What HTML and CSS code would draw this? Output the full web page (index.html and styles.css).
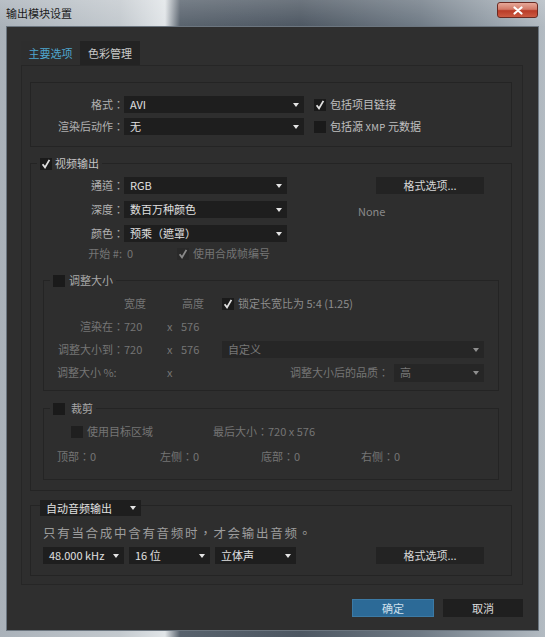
FILE: index.html
```html
<!DOCTYPE html>
<html lang="zh-CN">
<head>
<meta charset="utf-8">
<title>输出模块设置</title>
<link rel="stylesheet" href="styles.css">
</head>
<body>
<div class="window">
  <div class="titlebar">
    <div class="title">输出模块设置</div>
    <div class="close"><svg width="12" height="9" viewBox="0 0 12 9"><path d="M2.5 1.5 L9.5 7.5 M9.5 1.5 L2.5 7.5" stroke="#fff" stroke-width="2.2" stroke-linecap="round"/></svg></div>
  </div>
  <div class="client">
    <div class="tabs">
      <div class="tab active">主要选项</div>
      <div class="tab t2">色彩管理</div>
    </div>
    <div class="panel">
      <div class="box fmt">
        <div class="row">
          <span class="lbl l93">格式：</span>
          <div class="dd w180"><span>AVI</span><i class="arr"></i></div>
          <span class="chk on ml10"><svg viewBox="0 0 12 12"><path d="M2.6 6.3 L5 9.4 L9.4 1.9"/></svg></span>
          <span class="cbt">包括项目链接</span>
        </div>
        <div class="row mt5">
          <span class="lbl l93">渲染后动作：</span>
          <div class="dd w180"><span>无</span><i class="arr"></i></div>
          <span class="chk ml10"></span>
          <span class="cbt">包括源 <span class="small">XMP</span> 元数据</span>
        </div>
      </div>

      <div class="box video">
        <div class="legend"><span class="chk on"><svg viewBox="0 0 12 12"><path d="M2.6 6.3 L5 9.4 L9.4 1.9"/></svg></span><span>视频输出</span></div>
        <div class="row mt7">
          <span class="lbl l93">通道：</span>
          <div class="dd w163"><span>RGB</span><i class="arr"></i></div>
          <div class="btn ml89">格式选项...</div>
        </div>
        <div class="row mt7">
          <span class="lbl l93">深度：</span>
          <div class="dd w163"><span>数百万种颜色</span><i class="arr"></i></div>
          <span class="none">None</span>
        </div>
        <div class="row mt7">
          <span class="lbl l93">颜色：</span>
          <div class="dd w163"><span>预乘（遮罩）</span><i class="arr"></i></div>
        </div>
        <div class="row mt3">
          <span class="lbl dis l91">开始 #:</span>
          <span class="dis startval">0</span>
          <span class="chk dchk"><svg viewBox="0 0 12 12"><path d="M2.6 6.3 L5 9.4 L9.4 1.9"/></svg></span>
          <span class="cbt dis">使用合成帧编号</span>
        </div>

        <div class="box sub rsz">
          <div class="legend lg4"><span class="chk"></span><span>调整大小</span></div>
          <div class="row mt8">
            <span class="sp80"></span>
            <span class="dis w58">宽度</span>
            <span class="dis w40">高度</span>
            <span class="chk on"><svg viewBox="0 0 12 12"><path d="M2.6 6.3 L5 9.4 L9.4 1.9"/></svg></span>
            <span class="cbt dim">锁定长宽比为 5:4 (1.25)</span>
          </div>
          <div class="row mt6">
            <span class="lbl dis l80">渲染在：</span>
            <span class="dis w43">720</span>
            <span class="dis w14">x</span>
            <span class="dis">576</span>
          </div>
          <div class="row mt6">
            <span class="lbl dis l80">调整大小到：</span>
            <span class="dis w43">720</span>
            <span class="dis w14">x</span>
            <span class="dis w41">576</span>
            <div class="dd ddis w262"><span>自定义</span><i class="arr"></i></div>
          </div>
          <div class="row mt6">
            <span class="lbl dis l80 lft">调整大小 %:</span>
            <span class="w43"></span>
            <span class="dis w14">x</span>
            <span class="grow"></span>
            <span class="dis">调整大小后的品质：</span>
            <div class="dd ddis w90 qual"><span>高</span><i class="arr"></i></div>
          </div>
        </div>

        <div class="box sub crop">
          <div class="legend lg6"><span class="chk"></span><span>裁剪</span></div>
          <div class="row mt8">
            <span class="cell142"><span class="chk dchk0"></span><span class="cbt dis">使用目标区域</span></span>
            <span class="dis">最后大小：720 x 576</span>
          </div>
          <div class="row mt8 crops">
            <span class="dis w103">顶部：0</span>
            <span class="dis w101">左侧：0</span>
            <span class="dis w100">底部：0</span>
            <span class="dis">右侧：0</span>
          </div>
        </div>
      </div>

      <div class="box aud">
        <div class="dd legdd"><span>自动音频输出</span><i class="arr"></i></div>
        <div class="row note">只有当合成中含有音频时，才会输出音频。</div>
        <div class="row mt7 audrow">
          <div class="dd w81"><span>48.000 kHz</span><i class="arr"></i></div>
          <div class="dd w81 ml5"><span>16 位</span><i class="arr"></i></div>
          <div class="dd w81 ml5"><span>立体声</span><i class="arr"></i></div>
          <div class="btn ml80">格式选项...</div>
        </div>
      </div>
    </div>
    <div class="dlgbtns">
      <div class="dbtn ok">确定</div>
      <div class="dbtn cancel">取消</div>
    </div>
  </div>
</div>
</body>
</html>
```

FILE: styles.css
```css
* { box-sizing: border-box; margin: 0; padding: 0; }
html, body { width: 545px; height: 637px; overflow: hidden; }
body {
  font-family: "Noto Sans CJK TC", "Noto Sans CJK SC", "Noto Sans", sans-serif;
  font-size: 11px;
  font-feature-settings: "locl" 0;
  background: #7f8a94;
}
.window {
  width: 545px;
  height: 637px;
  display: flex;
  flex-direction: column;
  background:
    linear-gradient(180deg, rgba(255,255,255,.18) 0, rgba(255,255,255,0) 27px),
    linear-gradient(90deg, #a9b1b9 0, #c3c9ce 120px, #e1e5e8 165px, #58626d 180px, #4d5762 300px, #6f7a85 420px, #9aa4ad 500px, #b3bbc2 545px);
}
.titlebar {
  height: 27px;
  display: flex;
  justify-content: space-between;
  align-items: flex-start;
  padding: 0 7px 0 6px;
}
.title { line-height: 26px; color: #1b1b1b; font-size: 11px; }
.close {
  margin-top: 2px;
  width: 41px;
  height: 16px;
  border: 1px solid #6a2a22;
  border-radius: 3px;
  background: linear-gradient(180deg, #e6a899 0, #d27a68 45%, #b93b27 55%, #cc5a42 100%);
  display: flex;
  align-items: center;
  justify-content: center;
}
.client {
  margin: 0 7px 7px;
  flex: 1;
  background: #2f2f2f;
  padding: 14px 15px 0 14px;
  box-shadow: 0 0 0 1px #6c7680;
  display: flex;
  flex-direction: column;
}
.tabs { display: flex; height: 24px; }
.tab {
  height: 24px;
  line-height: 24px;
  text-align: center;
  color: #cacaca;
  background: #232323;
  width: 60px;
}
.tab.active { width: 59px; background: #2e2e2e; color: #4fa6cf; }
.panel {
  height: 520px;
  border: 1px solid #262626;
  background: #2e2e2e;
  padding-left: 8px;
  display: flex;
  flex-direction: column;
  align-items: flex-start;
}
.box {
  border: 1px solid #242424;
  width: 482px;
  display: flex;
  flex-direction: column;
  align-items: flex-start;
}
.fmt { margin-top: 16px; padding: 13px 0 11px; }
.video { margin-top: 16px; padding-bottom: 10px; }
.sub { width: 456px; margin-left: 12px; }
.rsz { margin-top: 18px; padding-bottom: 9px; }
.crop { margin-top: 17px; padding-bottom: 14px; }
.aud { margin-top: 14px; padding-bottom: 11px; }

.row {
  display: flex;
  align-items: center;
  align-self: stretch;
  height: 17px;
  line-height: 17px;
  white-space: nowrap;
}
.mt3 { margin-top: 3px; }
.mt5 { margin-top: 5px; }
.mt6 { margin-top: 6px; }
.mt7 { margin-top: 7px; }
.mt8 { margin-top: 8px; }
.ml5 { margin-left: 5px; }
.ml10 { margin-left: 10px; }
.ml80 { margin-left: 80px; }
.ml89 { margin-left: 89px; }

.lbl { flex: none; text-align: right; color: #b0b0b0; }
.lbl.lft { text-align: left; padding-left: 13px; }
.l93 { width: 93px; }
.l91 { width: 91px; }
.l80 { width: 80px; }
.sp80 { width: 80px; flex: none; }
.w14 { width: 14px; flex: none; }
.w40 { width: 40px; flex: none; }
.w41 { width: 41px; flex: none; }
.w43 { width: 43px; flex: none; }
.w58 { width: 58px; flex: none; }
.w81 { width: 81px; }
.w90 { width: 90px; }
.w100 { width: 100px; flex: none; }
.w101 { width: 101px; flex: none; }
.w103 { width: 103px; flex: none; }
.w163 { width: 163px; }
.w180 { width: 180px; }
.w262 { width: 262px; }
.grow { flex: 1; }

.lbl.dis, .dis { color: #757575; }
.dim { color: #8c8c8c; }
.cbt { color: #c0c0c0; margin-left: 4px; }
.cbt.dis { color: #757575; }
.cbt.dim { color: #8c8c8c; }
.small { font-size: 9.5px; letter-spacing: 0.3px; }

.dd {
  flex: none;
  display: flex;
  align-items: center;
  justify-content: space-between;
  height: 17px;
  background: #1e1e1e;
  color: #e0e0e0;
  padding: 0 5px 0 6px;
}
.arr {
  width: 0;
  height: 0;
  border-left: 3.5px solid transparent;
  border-right: 3.5px solid transparent;
  border-top: 4px solid #e4e4e4;
}
.ddis { background: #262626; color: #787878; }
.ddis .arr { border-top-color: #8f8f8f; }
.qual { margin-left: 5px; margin-right: 14px; height: 18px; }

.chk {
  flex: none;
  width: 12px;
  height: 12px;
  background: #1a1a1a;
  display: inline-flex;
}
.chk svg { width: 12px; height: 12px; }
.chk svg path { fill: none; stroke: #e0e0e0; stroke-width: 1.8; }
.dchk { background: #292929; }
.dchk svg path { stroke: #8a8a8a; }
.dchk0 { background: #1f1f1f; }

.legend {
  display: flex;
  align-items: center;
  align-self: flex-start;
  gap: 3px;
  height: 13px;
  line-height: 13px;
  margin: -7px 0 0 6px;
  padding: 0 3px;
  background: #2e2e2e;
  color: #c4c4c4;
}
.lg4 { gap: 4px; color: #a8a8a8; }
.lg6 { gap: 6px; color: #a8a8a8; }

.btn {
  flex: none;
  width: 108px;
  height: 17px;
  line-height: 17px;
  text-align: center;
  background: #232323;
  color: #d6d6d6;
}
.none { margin-left: 71px; color: #8a8a8a; margin-top: 3px; }
.startval { width: 50px; margin-left: 5px; flex: none; }

.cell142 { width: 142px; margin-left: 27px; display: flex; align-items: center; flex: none; }
.crops { padding-left: 13px; }

.legdd { margin: -6px 0 0 9px; height: 16px; width: 101px; }
.note { margin: 8px 0 0 12px; height: 16px; color: #9c9c9c; font-size: 12.5px; letter-spacing: 1.7px; }
.audrow { padding-left: 12px; }

.dlgbtns { display: flex; justify-content: flex-end; gap: 9px; margin-top: 14px; }
.dbtn { height: 18px; line-height: 18px; text-align: center; }
.ok { width: 82px; background: #2c6a97; color: #cfe0ec; border: 1px solid #3c7aa5; line-height: 16px; }
.cancel { width: 80px; background: #1f1f1f; color: #dcdcdc; }
```
